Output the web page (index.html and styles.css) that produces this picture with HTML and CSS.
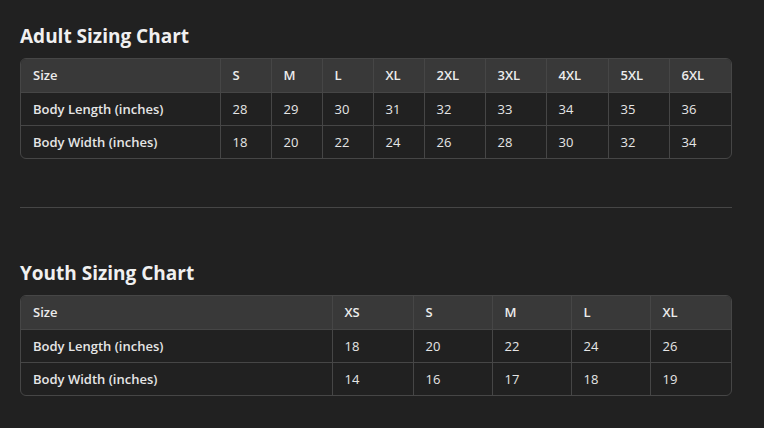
FILE: index.html
```html
<!DOCTYPE html>
<html>
<head>
<meta charset="utf-8">
<link rel="stylesheet" href="styles.css">
</head>
<body>
<main class="page">
  <section class="chart">
    <h2 class="chart-title">Adult Sizing Chart</h2>
    <div class="table-wrap">
      <table class="size-table adult">
        <colgroup>
          <col class="c-label"><col class="c1"><col class="c2"><col class="c3"><col class="c4"><col class="c5"><col class="c6"><col class="c7"><col class="c8"><col class="c9">
        </colgroup>
        <thead>
          <tr><th>Size</th><th>S</th><th>M</th><th>L</th><th>XL</th><th>2XL</th><th>3XL</th><th>4XL</th><th>5XL</th><th>6XL</th></tr>
        </thead>
        <tbody>
          <tr><th>Body Length (inches)</th><td>28</td><td>29</td><td>30</td><td>31</td><td>32</td><td>33</td><td>34</td><td>35</td><td>36</td></tr>
          <tr><th>Body Width (inches)</th><td>18</td><td>20</td><td>22</td><td>24</td><td>26</td><td>28</td><td>30</td><td>32</td><td>34</td></tr>
        </tbody>
      </table>
    </div>
  </section>
  <hr class="divider">
  <section class="chart">
    <h2 class="chart-title">Youth Sizing Chart</h2>
    <div class="table-wrap">
      <table class="size-table youth">
        <colgroup>
          <col class="c-label"><col class="c1"><col class="c2"><col class="c3"><col class="c4"><col class="c5">
        </colgroup>
        <thead>
          <tr><th>Size</th><th>XS</th><th>S</th><th>M</th><th>L</th><th>XL</th></tr>
        </thead>
        <tbody>
          <tr><th>Body Length (inches)</th><td>18</td><td>20</td><td>22</td><td>24</td><td>26</td></tr>
          <tr><th>Body Width (inches)</th><td>14</td><td>16</td><td>17</td><td>18</td><td>19</td></tr>
        </tbody>
      </table>
    </div>
  </section>
</main>
</body>
</html>
```

FILE: styles.css
```css
* { box-sizing: border-box; }
html, body {
  margin: 0;
  background: #212121;
  color: #ececec;
  font-family: "Open Sans", "Noto Sans", sans-serif;
}
.page {
  padding: 22px 32px 0 20px;
  display: flex;
  flex-direction: column;
}
.chart-title {
  margin: 0 0 8px 0;
  font-size: 19px;
  line-height: 28px;
  font-weight: 700;
  color: #f0f0f0;
}
.table-wrap {
  border: 1px solid #464646;
  border-radius: 6px;
  overflow: hidden;
}
.size-table {
  width: 100%;
  border-collapse: collapse;
  table-layout: fixed;
  font-size: 13px;
}
.size-table th,
.size-table td {
  height: 33px;
  padding: 0 12px;
  text-align: left;
  border-right: 1px solid #464646;
  border-bottom: 1px solid #464646;
  color: #e6e6e6;
}
.size-table th { font-weight: 600; }
.size-table td { font-weight: 400; }
.size-table tr > :last-child { border-right: none; }
.size-table tbody tr:last-child > * { border-bottom: none; }
.size-table thead th { background: #393939; color: #ececec; }

.adult .c-label { width: 199px; }
.adult .c1, .adult .c2, .adult .c3, .adult .c4 { width: 51px; }
.adult .c5, .adult .c6, .adult .c8 { width: 61px; }
.adult .c7 { width: 62px; }

.youth .c-label { width: 311px; }
.youth .c1 { width: 81px; }
.youth .c2, .youth .c3, .youth .c4 { width: 79px; }

.divider {
  margin: 48px 0 51px 0;
  border: none;
  border-top: 1px solid #464646;
  height: 0;
}
```
